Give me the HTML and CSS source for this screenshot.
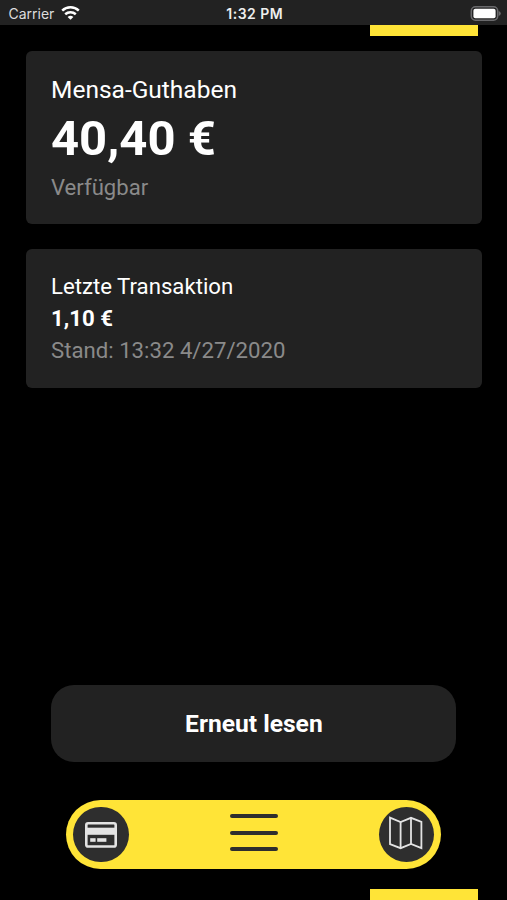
FILE: index.html
```html
<!DOCTYPE html>
<html lang="de">
<head>
    <meta charset="UTF-8">
    <meta name="viewport" content="width=device-width, initial-scale=1.0">
    <title>Mensa-Guthaben</title>
    <link rel="stylesheet" href="styles.css">
</head>
<body>

    <header class="status-bar">
        <div class="carrier">
            <span class="carrier-name">Carrier</span>
            <svg class="wifi" width="19" height="14" viewBox="0 0 19 14" fill="none" stroke="#fff" stroke-width="2.5">
                <path d="M1.2 4.6 A12.2 12.2 0 0 1 17.8 4.6"/>
                <path d="M4.2 8.2 A8 8 0 0 1 14.8 8.2"/>
                <path d="M9.5 13.8 L6.6 10.9 A4.5 4.5 0 0 1 12.4 10.9 Z" fill="#fff" stroke="none"/>
            </svg>
        </div>
        <span class="clock">1:32 PM</span>
        <svg class="battery" width="31" height="15" viewBox="0 0 31 15">
            <rect x="1.3" y="0.8" width="26.4" height="13.4" rx="4.2" fill="none" stroke="#6a6a6c" stroke-width="1.5"/>
            <rect x="3.4" y="2.8" width="22.2" height="9.4" rx="2" fill="#fff"/>
            <path d="M28.7 5 Q30.8 5.8 30.8 7.5 Q30.8 9.2 28.7 10 Z" fill="#6a6a6c"/>
        </svg>
    </header>

    <div class="stripe stripe-top"></div>

    <main class="content">
        <section class="card balance">
            <h2 class="balance-title">Mensa-Guthaben</h2>
            <p class="balance-value">40,40 €</p>
            <p class="balance-note">Verfügbar</p>
        </section>

        <section class="card transaction">
            <h2 class="transaction-title">Letzte Transaktion</h2>
            <p class="transaction-value">1,10 €</p>
            <p class="transaction-note">Stand: 13:32 4/27/2020</p>
        </section>

        <button class="read-button"><span class="read-label">Erneut lesen</span></button>

        <nav class="nav">
            <a class="nav-item" aria-label="Karte">
                <svg width="32" height="26" viewBox="0 0 32 26">
                    <rect x="1.3" y="1.3" width="29.4" height="23.2" rx="1.8" fill="none" stroke="#e3e3e3" stroke-width="2.6"/>
                    <rect x="2" y="5.7" width="28" height="7.1" fill="#e3e3e3"/>
                    <rect x="5.2" y="16.2" width="5.4" height="3.6" fill="#e3e3e3"/>
                    <rect x="12.2" y="16.2" width="9.2" height="3.6" fill="#e3e3e3"/>
                </svg>
            </a>
            <a class="nav-menu" aria-label="Menü">
                <span class="menu-line"></span>
                <span class="menu-line"></span>
                <span class="menu-line"></span>
            </a>
            <a class="nav-item" aria-label="Campus">
                <svg class="map-icon" width="34" height="34" viewBox="0 0 34 34" fill="none" stroke="#e3e3e3" stroke-width="1.8" stroke-linejoin="miter">
                    <path d="M1 1.6 L11.6 6 L22 1.8 L32.4 5.8 V32.2 L22 28 L11.6 32.2 L1 28.2 Z"/>
                    <path d="M11.6 6 V32.2 M22 1.8 V28"/>
                </svg>
            </a>
        </nav>
    </main>

    <div class="stripe stripe-bottom"></div>

</body>
</html>
```

FILE: styles.css
```css
* {
    margin: 0;
    padding: 0;
    box-sizing: border-box;
}

body {
    height: 900px;
    display: flex;
    flex-direction: column;
    background: #000;
    color: #fff;
    font-family: Roboto, sans-serif;
    overflow: hidden;
}

/* Status bar */
.status-bar {
    height: 25px;
    flex: none;
    display: grid;
    grid-template-columns: 1fr auto 1fr;
    align-items: center;
    padding: 2px 6px 0 8.5px;
    background: #222;
    font-family: Inter, sans-serif;
    font-size: 14px;
}

.carrier {
    display: flex;
    align-items: center;
    gap: 7px;
    color: #ddd;
}

.clock {
    font-weight: 600;
    letter-spacing: 0.5px;
    color: #eee;
}

.wifi {
    margin-top: -1px;
}

.battery {
    justify-self: end;
    margin-top: -1px;
}

/* Yellow blocks at the screen edges */
.stripe {
    flex: none;
    width: 108.5px;
    margin-left: 369.5px;
    background: #ffe437;
}

.stripe-top {
    height: 11.4px;
}

.stripe-bottom {
    height: 11px;
}

.content {
    flex: 1;
    display: flex;
    flex-direction: column;
    padding: 14.6px 25.5px 20px 26px;
}

/* Cards */
.card {
    padding: 0 25px;
    border-radius: 6px;
    background: #222;
}

.card h2 {
    font-weight: 400;
}

.balance {
    height: 173px;
    padding-top: 23px;
    margin-bottom: 25px;
}

.balance-title {
    font-size: 24.5px;
    line-height: 32px;
}

.balance-value {
    font-size: 49px;
    font-weight: 700;
    line-height: 66px;
}

.balance-note {
    font-size: 22.1px;
    line-height: 30px;
    color: #8a8a8a;
}

.transaction {
    height: 139px;
    padding-top: 21.5px;
}

.transaction-title,
.transaction-value,
.transaction-note {
    font-size: 22.2px;
    line-height: 32px;
}

.transaction-value {
    font-weight: 700;
}

.transaction-note {
    color: #8a8a8a;
}

.read-button {
    width: 405px;
    height: 77.5px;
    margin: auto 0 38px 25.4px;
    border: none;
    border-radius: 23px;
    background: #222;
    color: #fff;
    font-family: inherit;
    font-size: 24.6px;
    font-weight: 700;
}

/* Bottom navigation */
.nav {
    width: 375px;
    height: 69px;
    margin-left: 40.3px;
    padding: 0 7px;
    display: flex;
    align-items: center;
    justify-content: space-between;
    border-radius: 35px;
    background: #ffe437;
}

.nav-item {
    width: 55.5px;
    height: 55.5px;
    display: flex;
    align-items: center;
    justify-content: center;
    border-radius: 50%;
    background: #2e2e2e;
}

.map-icon {
    margin: -3px 1px 0 0;
}

.nav-menu {
    display: flex;
    flex-direction: column;
    gap: 12.7px;
    margin-top: -4px;
}

.menu-line {
    width: 48px;
    height: 4px;
    border-radius: 2px;
    background: #2e2e2e;
}
```
